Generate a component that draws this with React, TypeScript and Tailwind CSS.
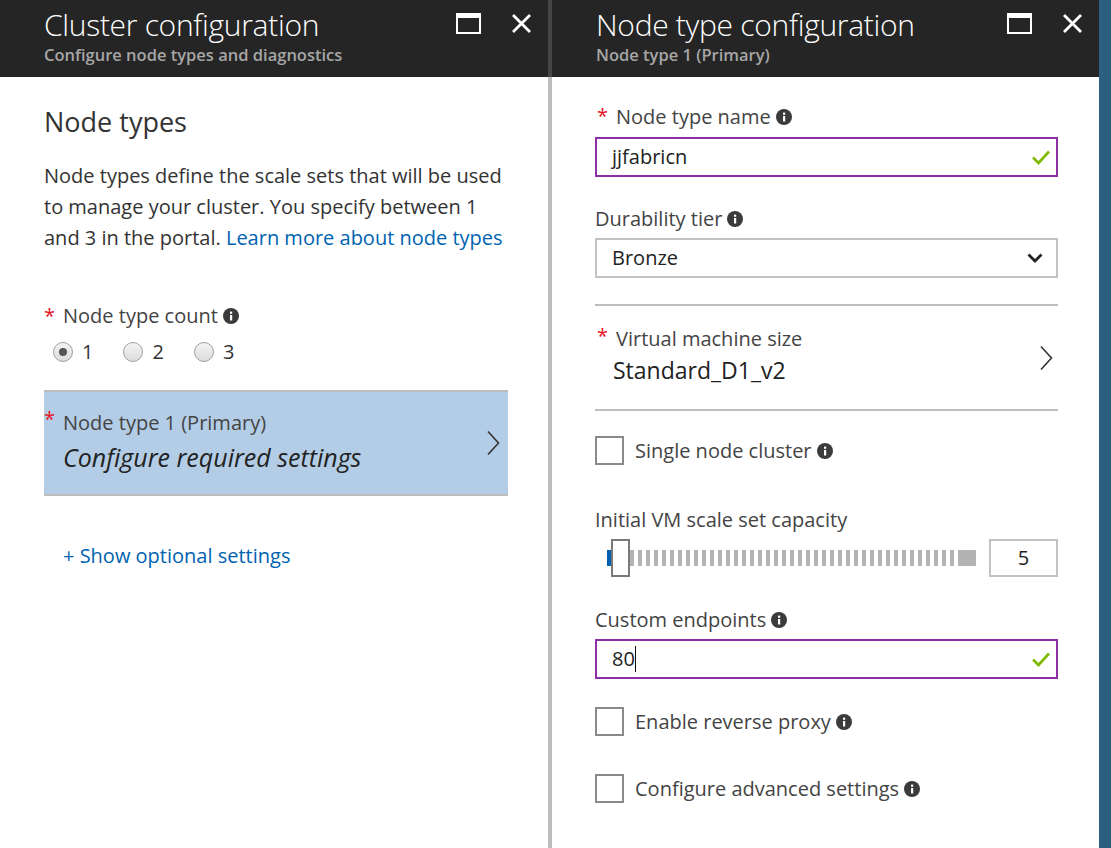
import React from 'react';

const font = { fontFamily: '"Segoe UI", "Open Sans", "Noto Sans", sans-serif' };

const Info = () => (
  <svg width="16" height="16" viewBox="0 0 16 16" className="inline-block shrink-0">
    <circle cx="8" cy="8" r="8" fill="#3b3b3b" />
    <rect x="7" y="7" width="2.2" height="5.5" fill="#fff" />
    <rect x="7" y="3.6" width="2.2" height="2.2" fill="#fff" />
  </svg>
);

const Check = () => (
  <svg width="20" height="16" viewBox="0 0 20 16">
    <path d="M2 8.5 L7.5 14 L18 2.5" fill="none" stroke="#7fba00" strokeWidth="2.6" />
  </svg>
);

const ChevronRight = () => (
  <svg width="14" height="26" viewBox="0 0 14 26">
    <path d="M2 1.5 L12.5 13 L2 24.5" fill="none" stroke="#333" strokeWidth="1.6" />
  </svg>
);

const Star = () => <span className="text-[#e81123] text-[20px] leading-none">*</span>;

const Header = ({ title, subtitle }: { title: string; subtitle: string }) => (
  <div className="h-[77px] bg-[#252525] flex items-start justify-between pl-[44px] pr-[16px] text-white">
    <div className="pt-[7px]">
      <div className="text-[30px] font-light leading-[36px] tracking-[-0.3px]">{title}</div>
      <div className="text-[16.5px] font-semibold text-[#a6a6a6] leading-[22px] mt-[1px]">{subtitle}</div>
    </div>
    <div className="flex items-center gap-[30px] pt-[13px]">
      <div className="w-[25px] h-[21px] border-2 border-t-[5px] border-white" />
      <svg width="21" height="21" viewBox="0 0 21 21">
        <path d="M2 2 L19 19 M19 2 L2 19" stroke="#fff" strokeWidth="2.8" />
      </svg>
    </div>
  </div>
);

const Radio = ({ label, checked }: { label: string; checked?: boolean }) => (
  <div className="flex items-center gap-[9px]">
    <div className="w-[20px] h-[20px] rounded-full border border-[#a0a0a0] bg-gradient-to-b from-[#f4f4f4] to-[#dcdcdc] flex items-center justify-center">
      {checked && <div className="w-[8px] h-[8px] rounded-full bg-[#555]" />}
    </div>
    <span className="text-[20px] text-[#333]">{label}</span>
  </div>
);

const Checkbox = ({ label, info }: { label: string; info?: boolean }) => (
  <div className="flex items-center h-[29px]">
    <div className="w-[29px] h-[29px] border-2 border-[#8a8a8a] bg-white shrink-0" />
    <span className="ml-[11px] text-[20px] text-[#444] mr-[5px]">{label}</span>
    {info && <Info />}
  </div>
);

const TextBox = ({ value, cursor }: { value: string; cursor?: boolean }) => (
  <div className="h-[40px] border-2 border-[#8d2fa5] flex items-center justify-between pl-[15px] pr-[5px]">
    <span className="text-[20px] text-[#222] flex items-center">
      {value}
      {cursor && <span className="inline-block w-px h-[26px] bg-[#111]" />}
    </span>
    <Check />
  </div>
);

export default function App() {
  const ticks = Array.from({ length: 41 });
  return (
    <div className="w-[1111px] h-[848px] flex bg-white overflow-hidden" style={font}>
      {/* left blade */}
      <div className="w-[548px] shrink-0 flex flex-col">
        <Header title="Cluster configuration" subtitle="Configure node types and diagnostics" />
        <div className="pl-[44px] pr-[40px]">
          <h2 className="text-[27px] text-[#333] leading-[32px] mt-[29px]">Node types</h2>
          <p className="text-[20px] leading-[31px] text-[#333] mt-[22px] whitespace-nowrap">
            Node types define the scale sets that will be used
            <br />
            to manage your cluster. You specify between 1
            <br />
            and 3 in the portal. <span className="text-[#0063b1]">Learn more about node types</span>
          </p>
          <div className="flex items-center mt-[50px] h-[26px]">
            <Star />
            <span className="ml-[8px] text-[20px] text-[#444] mr-[5px]">Node type count</span>
            <Info />
          </div>
          <div className="flex items-center gap-[30px] ml-[9px] mt-[8px] h-[30px]">
            <Radio label="1" checked />
            <Radio label="2" />
            <Radio label="3" />
          </div>
          <div className="mt-[23px] h-[106px] bg-[#b3cde6] border-y-2 border-[#bdbdbd] flex items-center justify-between pr-[8px]">
            <div className="-mt-[4px]">
              <div className="flex items-start h-[28px]">
                <Star />
                <span className="ml-[8px] text-[20px] text-[#444] leading-[28px]">Node type 1 (Primary)</span>
              </div>
              <div className="pl-[19px] text-[25px] italic text-[#222] leading-[34px] mt-[3px]">
                Configure required settings
              </div>
            </div>
            <ChevronRight />
          </div>
          <div className="mt-[47px] pl-[19px] text-[20px] text-[#0063b1] leading-[26px]">+ Show optional settings</div>
        </div>
      </div>

      {/* separator */}
      <div className="w-[4px] shrink-0 flex flex-col">
        <div className="h-[77px] bg-[#454545]" />
        <div className="flex-1 bg-[#bdbdbd]" />
      </div>

      {/* right blade */}
      <div className="flex-1 flex flex-col">
        <Header title="Node type configuration" subtitle="Node type 1 (Primary)" />
        <div className="pl-[43px] pr-[41px]">
          <div className="flex items-center mt-[27px] h-[26px]">
            <span className="ml-[2px]"><Star /></span>
            <span className="ml-[8px] text-[20px] text-[#444] mr-[5px]">Node type name</span>
            <Info />
          </div>
          <div className="mt-[7px]">
            <TextBox value="jjfabricn" />
          </div>

          <div className="flex items-center mt-[29px] h-[26px]">
            <span className="text-[20px] text-[#444] mr-[5px]">Durability tier</span>
            <Info />
          </div>
          <div className="mt-[6px] h-[40px] border-2 border-[#c2c2c2] flex items-center justify-between pl-[15px] pr-[13px]">
            <span className="text-[20px] text-[#222]">Bronze</span>
            <svg width="16" height="10" viewBox="0 0 16 10">
              <path d="M1.5 1.5 L8 8 L14.5 1.5" fill="none" stroke="#222" strokeWidth="2.8" />
            </svg>
          </div>

          <div className="mt-[26px] border-t-2 border-[#bdbdbd]" />
          <div className="h-[103px] flex items-center justify-between pr-[5px]">
            <div className="-mt-[4px]">
              <div className="flex items-start h-[28px]">
                <span className="ml-[2px]"><Star /></span>
                <span className="ml-[8px] text-[20px] text-[#444] leading-[28px]">Virtual machine size</span>
              </div>
              <div className="pl-[18px] text-[23px] text-[#222] leading-[34px]">Standard_D1_v2</div>
            </div>
            <ChevronRight />
          </div>
          <div className="border-t-2 border-[#bdbdbd]" />

          <div className="mt-[25px]">
            <Checkbox label="Single node cluster" info />
          </div>

          <div className="mt-[42px] text-[20px] text-[#444] leading-[26px]">Initial VM scale set capacity</div>
          <div className="mt-[6px] flex items-center h-[38px]">
            <div className="ml-[12px] w-[4px] h-[16px] bg-[#0060b0]" />
            <div className="w-[19px] h-[38px] border-2 border-[#7a7a7a] bg-white shrink-0" />
            <div className="flex gap-[4px]">
              {ticks.map((_, i) => (
                <div key={i} className="w-[4px] h-[16px] bg-[#b3b3b3]" />
              ))}
            </div>
            <div className="ml-[4px] w-[18px] h-[16px] bg-[#b3b3b3]" />
            <div className="ml-auto w-[69px] h-[38px] border-2 border-[#c2c2c2] flex items-center justify-center text-[20px] text-[#222]">
              5
            </div>
          </div>

          <div className="flex items-center mt-[30px] h-[26px]">
            <span className="text-[20px] text-[#444] mr-[5px]">Custom endpoints</span>
            <Info />
          </div>
          <div className="mt-[6px]">
            <TextBox value="80" cursor />
          </div>

          <div className="mt-[28px]">
            <Checkbox label="Enable reverse proxy" info />
          </div>
          <div className="mt-[38px]">
            <Checkbox label="Configure advanced settings" info />
          </div>
        </div>
      </div>

      {/* right edge strip */}
      <div className="w-[12px] shrink-0 bg-[#2b5f80]" />
    </div>
  );
}
